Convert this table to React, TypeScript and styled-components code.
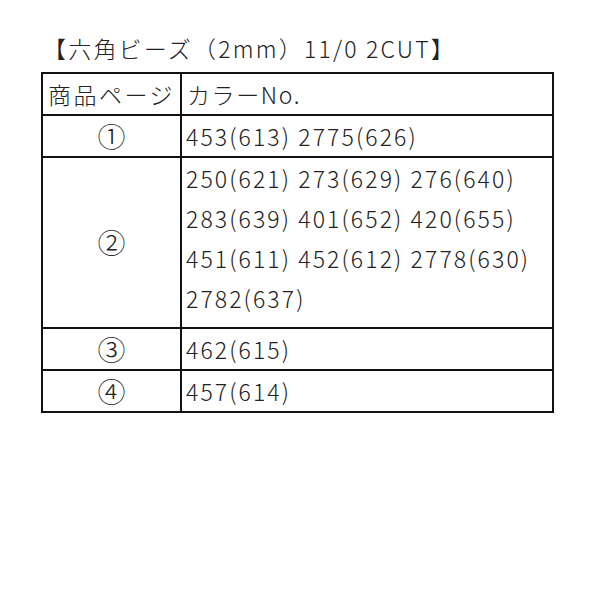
import React from 'react'
import styled, { createGlobalStyle } from 'styled-components'

const GlobalStyle = createGlobalStyle`
  html, body {
    margin: 0;
    padding: 0;
    background: #fff;
  }
  body {
    font-family: "Noto Sans CJK JP", "Noto Sans", sans-serif;
    font-weight: 300;
    color: #222;
  }
`

const rows = [
  { page: '①', colors: ['453(613) 2775(626)'] },
  {
    page: '②',
    colors: [
      '250(621) 273(629) 276(640)',
      '283(639) 401(652) 420(655)',
      '451(611) 452(612) 2778(630)',
      '2782(637)',
    ],
  },
  { page: '③', colors: ['462(615)'] },
  { page: '④', colors: ['457(614)'] },
]

const App = () => {
  return (
    <Page>
      <GlobalStyle />
      <Title>【六角ビーズ（2mm）11/0 2CUT】</Title>
      <Table>
        <colgroup>
          <col style={{ width: 139 }} />
          <col />
        </colgroup>
        <thead>
          <tr>
            <HeadCell spacing={2.5}>商品ページ</HeadCell>
            <HeadCell spacing={1.6}>カラーNo.</HeadCell>
          </tr>
        </thead>
        <tbody>
          {rows.map((r) => (
            <tr key={r.page}>
              <PageCell>{r.page}</PageCell>
              <ColorCell multi={r.colors.length > 1}>
                {r.colors.map((c) => (
                  <Line key={c}>{c}</Line>
                ))}
              </ColorCell>
            </tr>
          ))}
        </tbody>
      </Table>
    </Page>
  )
}

const Page = styled.div`
  width: 600px;
  height: 600px;
  padding: 33px 0 0 41px;
  box-sizing: border-box;
`
const Title = styled.div`
  font-size: 23px;
  line-height: 30px;
  height: 39px;
  letter-spacing: 2.2px;
  white-space: nowrap;
  margin-left: 2px;
`
const Table = styled.table`
  border-collapse: collapse;
  width: 513px;
  table-layout: fixed;
  font-size: 23px;
  letter-spacing: 2.1px;
`
const Cell = styled.td`
  border: 2px solid #111;
  padding: 0 4px;
  line-height: 39px;
  height: 40px;
  vertical-align: middle;
  white-space: nowrap;
`
const HeadCell = styled(Cell).attrs({ as: 'th' })<{ spacing: number }>`
  font-weight: 300;
  text-align: left;
  padding-left: 5px;
  letter-spacing: ${(p) => p.spacing}px;
`
const PageCell = styled(Cell)`
  text-align: center;
  letter-spacing: 0;
  font-size: 28px;
`
const ColorCell = styled(Cell)<{ multi?: boolean }>`
  text-align: left;
  padding-bottom: ${(p) => (p.multi ? '9px' : '0')};
  vertical-align: ${(p) => (p.multi ? 'top' : 'middle')};
`
const Line = styled.div`
  line-height: 40px;
`

export default App
